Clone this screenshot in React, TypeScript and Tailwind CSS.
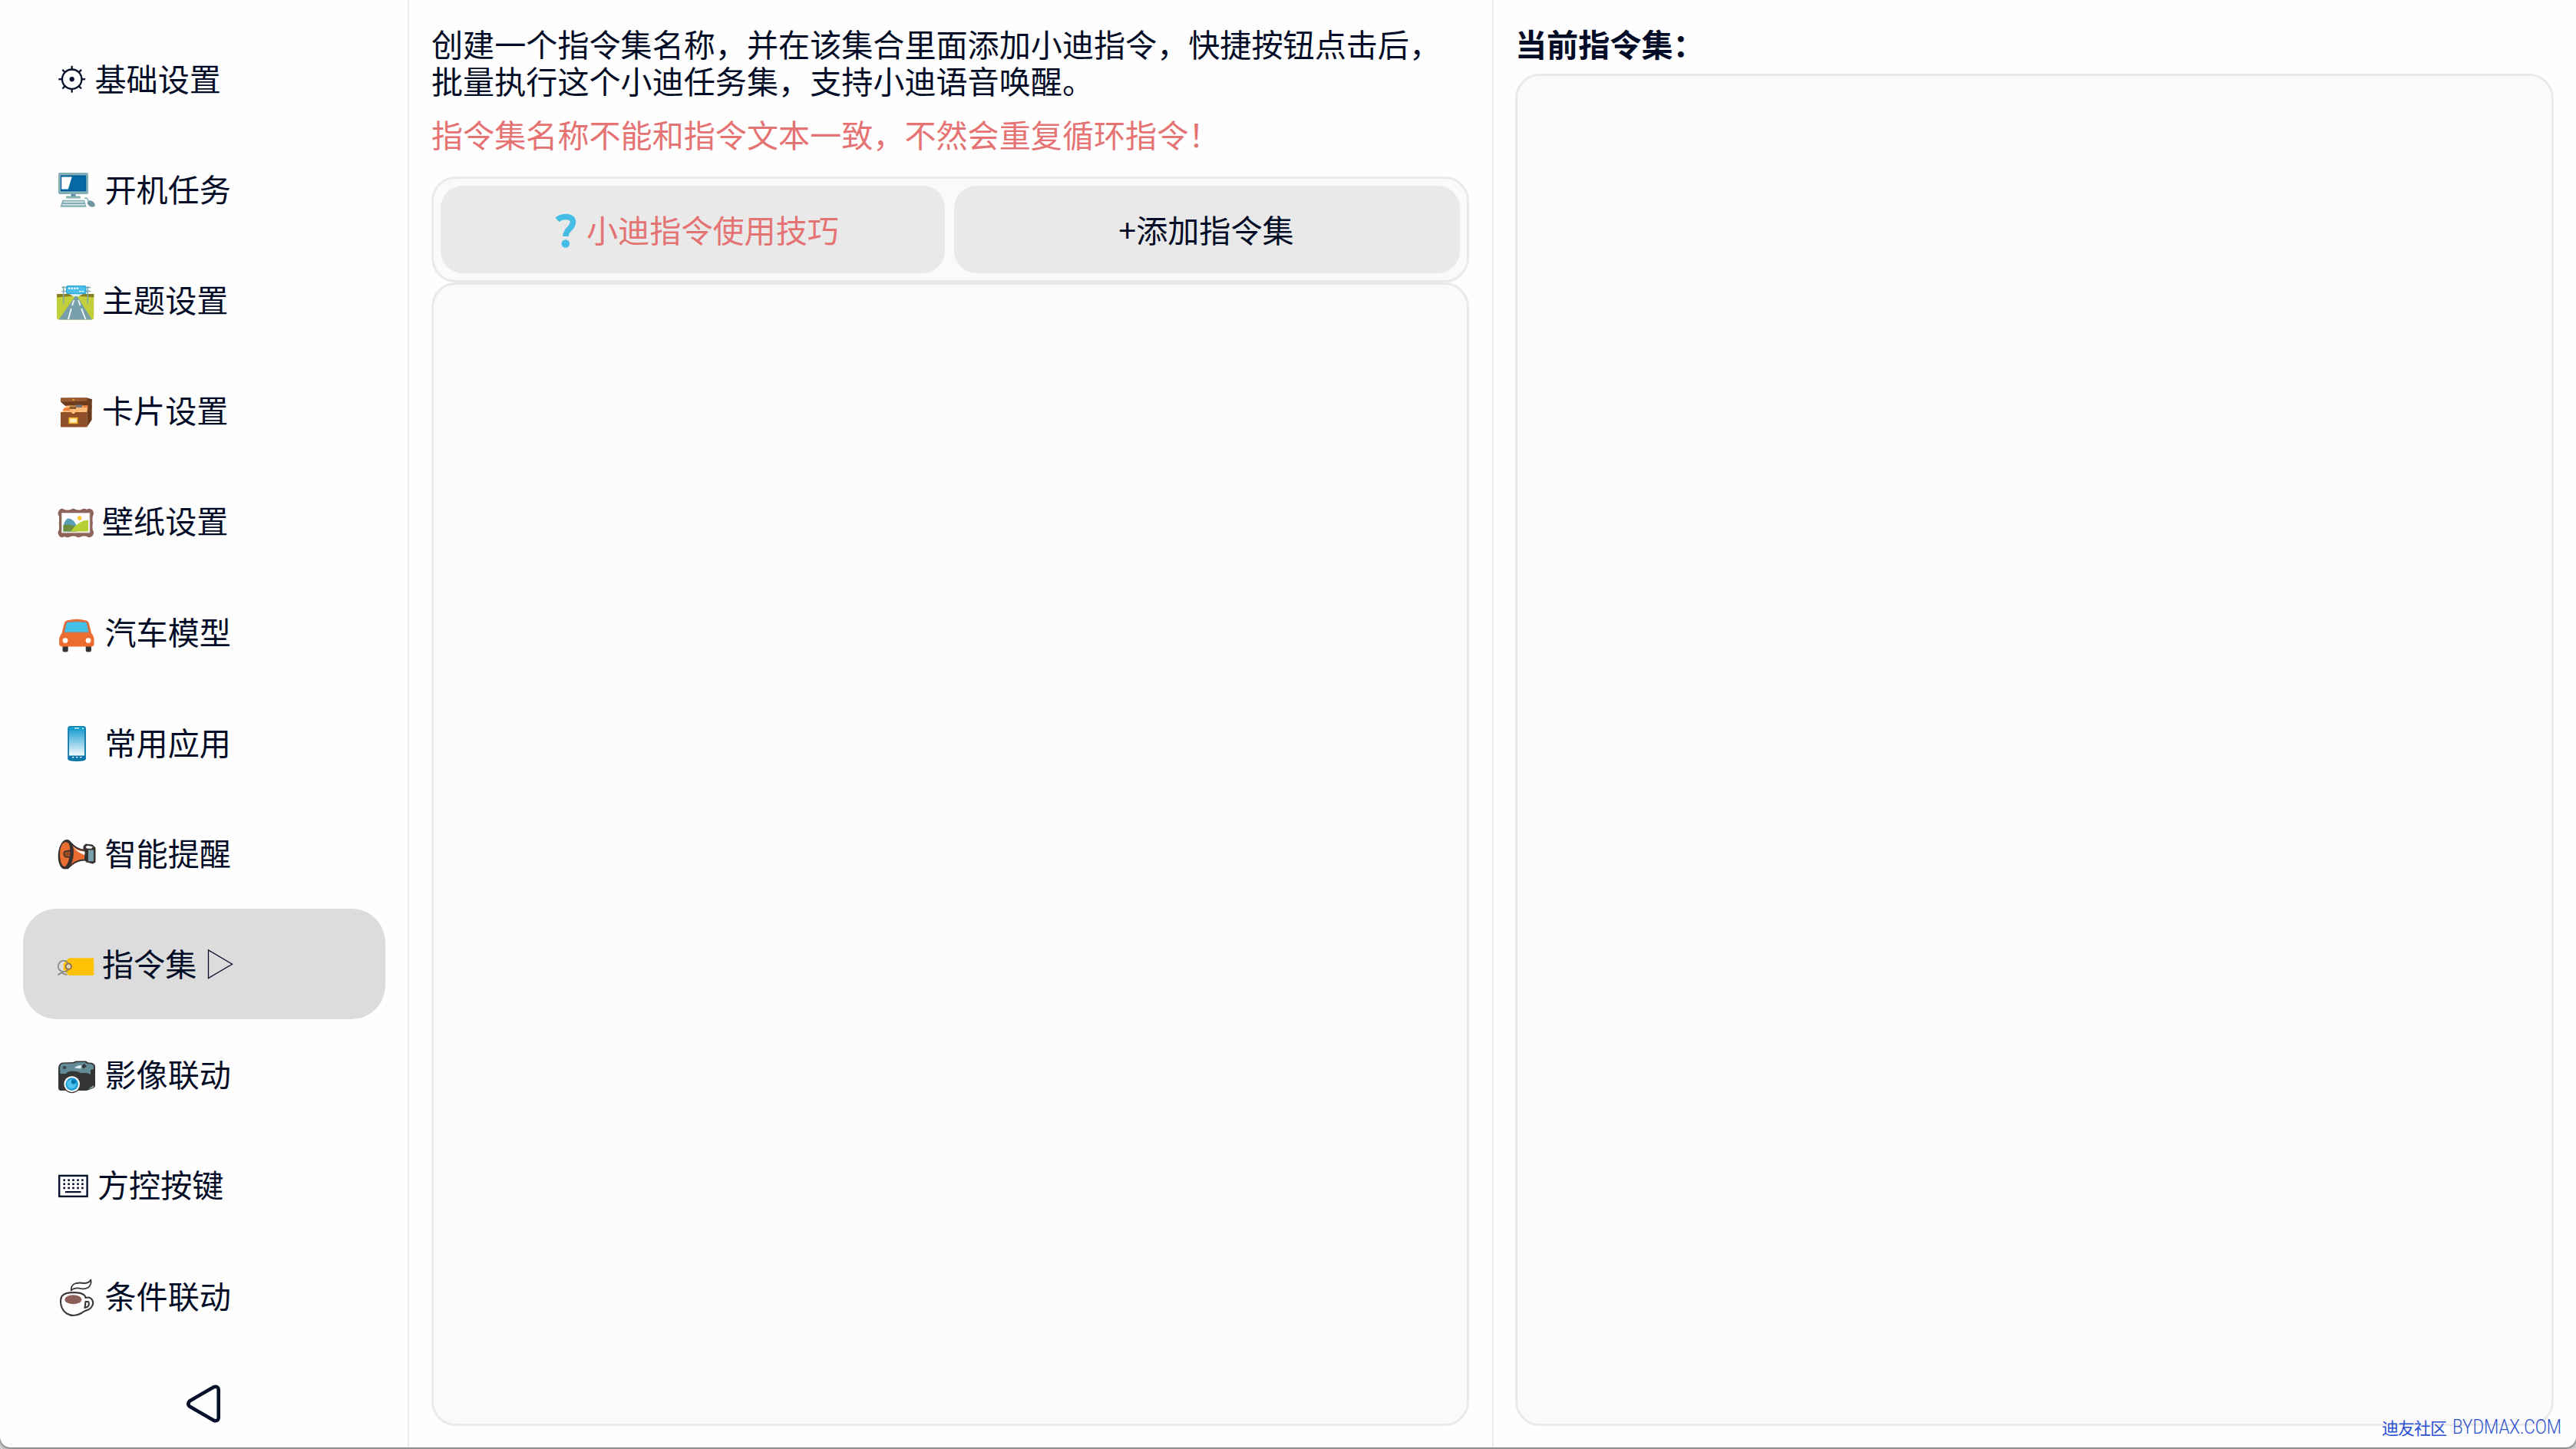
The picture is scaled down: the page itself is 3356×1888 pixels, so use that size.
import React from "react";

const GearIcon = () => (
  <g stroke="#07102a" fill="none" strokeWidth="2.3">
    <circle cx="18.7" cy="29.2" r="12.7" />
    <circle cx="18.7" cy="29.2" r="3.1" fill="#07102a" stroke="none" />
    {[0, 45, 90, 135, 180, 225, 270, 315].map((a) => (
      <path key={a} d="M18.7 16.5V11.8" transform={`rotate(${a} 18.7 29.2)`} />
    ))}
  </g>
);

const ComputerIcon = () => (
  <g>
    <rect x="1" y="7" width="39" height="28" rx="2" fill="#82aeb6" />
    <rect x="4" y="10.5" width="33.2" height="20.7" fill="#01579b" />
    <rect x="5" y="11.5" width="31.4" height="18.6" fill="#0569a4" />
    <path d="M5.2 12.5H18.7L13.8 28.4H5.2Z" fill="#fff" />
    <rect x="17.5" y="35" width="6" height="3" fill="#5f8c96" />
    <rect x="11" y="37.5" width="19" height="3" rx="1" fill="#82aeb6" />
    <path d="M6.3 42.7H35L37.6 51.7H3.5Z" fill="#82aeb6" />
    <path d="M7.5 45.3H34.3M6.3 48.7H35.6" stroke="#dbe8ea" strokeWidth="1.5" />
    <path d="M35 40.2C39 39.6 39.5 41 40 44.5" stroke="#82aeb6" strokeWidth="1.5" fill="none" />
    <ellipse cx="43.8" cy="47.6" rx="5.4" ry="3.7" transform="rotate(32 43.8 47.6)" fill="#6f98a2" />
  </g>
);

const RoadIcon = () => (
  <g>
    <path d="M-1 21H47.3V51.5a3 3 0 0 1-3 3H2a3 3 0 0 1-3-3Z" fill="#c0cf3a" />
    <path d="M-1 21H47.3V25.5L24 23.5L-1 25.5Z" fill="#8a7d22" />
    <path d="M15 21H33L27 24.5H21Z" fill="#e6f3f5" />
    <path d="M23 24H25.5L44.8 54.5H1.5Z" fill="#78a0ab" />
    <path d="M21.5 29L19 36M17.8 40L14 54M27 29L29.5 36M31 40L36.5 54" stroke="#f5fafa" strokeWidth="1.8" />
    <path d="M7.7 11V34M39.3 11V34M5.5 12.5H43M5.5 17.5H43" stroke="#82a5ad" strokeWidth="1.5" />
    <rect x="11" y="10" width="26.5" height="11.3" rx="2.5" fill="#2da8dd" />
    <rect x="12.3" y="11.2" width="23.9" height="8.8" rx="1.5" fill="#4cc0ea" />
    <path d="M14 13.8H27" stroke="#fff" strokeWidth="2" strokeDasharray="2.4 1.2" />
    <path d="M28 17.6H34" stroke="#fff" strokeWidth="1.4" strokeDasharray="2.6 .8" />
  </g>
);

const CardBoxIcon = () => (
  <g>
    <path d="M4 11.6L38 11.2L45 13.3L44.3 26L38.3 30L9.5 21.6L4 16.5Z" fill="#6d3d1e" />
    <path d="M4 11.6L38 11.2L38.3 15.5L8 16.8L4 15.8Z" fill="#9a5a30" />
    <path d="M11.7 21.5H39.5L38.3 31H5Z" fill="#ffbb75" />
    <path d="M8.5 24.5H16V28H6.5Z" fill="#f0803c" />
    <path d="M16 22.6H24V26H15Z" fill="#8a5a2c" />
    <path d="M24 20.5H32V24H24Z" fill="#747474" />
    <path d="M33 21.5H39V24H33Z" fill="#ef7c3b" />
    <path d="M4 30H17.5Q20.5 33.5 23.5 30H38.3V49.5H4Z" fill="#8f4f28" />
    <path d="M38.3 30L44.6 20V40L38.3 49.5Z" fill="#6d3a1c" />
    <circle cx="20.5" cy="13.8" r="1.2" fill="#f2a83c" />
    <circle cx="20.5" cy="30.6" r="1.5" fill="#ffcc80" />
    <rect x="15.2" y="37.6" width="10.4" height="6.8" fill="#ffefc0" stroke="#f5b22b" strokeWidth="1.6" />
  </g>
);

const PictureIcon = () => (
  <g>
    <rect x="2" y="13.5" width="43.5" height="34" fill="#8f625a" />
    <path
      d="M2 14Q5 10 9 13Q13 16 17 13Q20 10.5 24 13Q28 15.5 31 13Q35 10.5 38 13Q42 10 45.5 14Q48.5 18 45.5 22Q43.5 26 46 30.5Q43.5 35 45.5 39Q48.5 43 45.5 47Q42 51 38 48Q35 46 31 48Q27 50.5 24 48Q20 46 17 48Q13 50.5 9 48Q5 51 2 47Q-1 43 2 39Q4 35 1.5 30.5Q4 26 2 22Q-1 18 2 14Z"
      fill="#8f625a"
    />
    <rect x="5" y="17" width="37.3" height="26.5" fill="#d7ccc8" />
    <rect x="6" y="18" width="35.3" height="24.5" fill="#fff" />
    <path d="M7.5 34Q10 24 15 24.5Q22 26 25 35V41.4H7.5Z" fill="#5c9eb5" />
    <path d="M7.5 33Q14 31.5 24 35V41.4H7.5Z" fill="#6c8f3e" />
    <path d="M17 41.4Q27 27 40 26.5V41.4Z" fill="#b7d032" />
    <circle cx="28.7" cy="24.1" r="2.8" fill="#fbc52c" />
  </g>
);

const CarIcon = () => (
  <g>
    <rect x="6.5" y="42" width="7.2" height="12.6" rx="2.5" fill="#333" />
    <rect x="36.7" y="42" width="7.2" height="12.6" rx="2.5" fill="#333" />
    <path
      d="M12 13.5Q25 10.2 37.5 13.5Q40 14.2 40.8 17L44.3 30.5Q47.6 34 47.6 39V43.5Q47.6 47.6 43.5 47.6H6.3Q2.1 47.6 2.1 43.5V39Q2.1 34 5.4 30.5L8.8 17Q9.5 14.2 12 13.5Z"
      fill="#ed6c30"
    />
    <path d="M13 15.6Q25 14 36.7 15.6Q38 16 38.6 18L40.6 29H8.7L11 18Q11.5 16 13 15.6Z" fill="#45c0e6" stroke="#a9806b" strokeWidth="1" />
    <circle cx="10" cy="39.6" r="3.4" fill="#fff" />
    <circle cx="40" cy="39.6" r="3.4" fill="#fff" />
  </g>
);

const PhoneIcon = () => (
  <g>
    <defs>
      <linearGradient id="phoneScreen" x1="0" y1="0" x2="0" y2="1">
        <stop offset="0" stopColor="#2ba4d6" />
        <stop offset="1" stopColor="#f4fafc" />
      </linearGradient>
    </defs>
    <path d="M13.2 10Q13.2 7 17 7H33Q36.9 7 36.9 10V50Q36.9 53 25 53Q13.2 53 13.2 50Z" fill="#0c77a8" />
    <path d="M14.5 10Q15 8 18 8H32Q35 8 35.5 10V13H14.5Z" fill="#169ccc" />
    <rect x="15" y="12.7" width="20" height="32.8" fill="url(#phoneScreen)" />
    <path d="M22 9.8H28" stroke="#d7eef6" strokeWidth="1.4" />
    <path d="M19 47.8H31.5" stroke="#e3f2f8" strokeWidth="1.6" strokeDasharray="2.2 2.9" />
    <circle cx="33" cy="10.2" r="1" fill="#d7eef6" />
  </g>
);

const MegaphoneIcon = () => (
  <g stroke="#36302e" strokeWidth="2" strokeLinejoin="round">
    <path d="M34.5 20L37 17.5L45 18.5L48.5 22V40L46 41.5L38 39.5L34.5 36Z" fill="#36302e" />
    <path d="M36.5 20.5L39 18.8L46 20.3L44 22.8L38 22.5Z" fill="#fff" stroke="none" />
    <rect x="40" y="24.5" width="7" height="14.8" fill="#78a0ab" stroke="none" />
    <path d="M12 12C17 12 22 25 36 25V37.5C26 37 20 42 13 48.5Z" fill="#e96c32" />
    <path d="M20 20C24 24.5 30 26.5 35.5 26.5V31C30 29 24 26 20 20Z" fill="#fff" stroke="none" />
    <ellipse cx="10.8" cy="30.2" rx="9" ry="18.3" transform="rotate(5 10.8 30.2)" fill="#36302e" />
    <path d="M9 14.5C3 17 2 30 4 39C5 44 7.5 46.5 10 46C16 42 18.5 20 14 15.5C12.5 14 10.5 14 9 14.5Z" fill="#ea6d31" stroke="none" />
    <path d="M9 26.5L17 25V34L10 33.5Q7 30 9 26.5Z" fill="#9c4a25" strokeWidth="1.4" />
  </g>
);

const TagIcon = () => (
  <g>
    <path d="M16 20.3H46.3Q47.3 20.3 47.3 21.3V42Q47.3 43 46.3 43H16Q14.5 43 13 41L7.7 35.5V27.5L13 22Q14.5 20.3 16 20.3Z" fill="#fdc204" />
    <circle cx="14.3" cy="31.3" r="3.6" fill="#e6d6ae" stroke="#84695c" strokeWidth="1.8" />
    <path d="M13.5 28C12.5 22.5 4 22 1.3 28.5C-.5 34 3 38.5 9.5 38C12 37.5 13.3 36.5 13.8 35M7 38.3L.5 42.3M5 38.8Q8 42 12.5 42" fill="none" stroke="#85827e" strokeWidth="1.6" />
  </g>
);

const CameraIcon = () => (
  <g>
    <path d="M1 20Q1 14 6 12.5L20 12L24 10.5L37 10.5L40 12.5Q49 12 49 18V42Q49 45 46 46L38 49H4Q1 49 1 45Z" fill="#353535" />
    <path d="M3 20Q3 14.5 7 13.8L21 13.5L25 12H35.5L39 14Q47 13.5 47 18V21L43 22V28L38 26H30Q26 23.5 19 23.5Q12 24 11 27H3.5Z" fill="#638b95" />
    <path d="M22 19.5Q25 15.5 32 16L30 20.5Z" fill="#d9e9ed" />
    <path d="M31 17L35 14L38 17L34 20.5Z" fill="#33373a" />
    <ellipse cx="9" cy="19" rx="2.5" ry="2" fill="#33474d" />
    <path d="M40 47L47 42V45Z" fill="#8fb0b8" />
    <circle cx="18.7" cy="40.6" r="11.7" fill="#3a3a3a" />
    <circle cx="18.7" cy="40.6" r="10.3" fill="#fff" />
    <circle cx="18.7" cy="40.6" r="8.3" fill="#1f9fd8" />
    <circle cx="18.2" cy="40.6" r="6" fill="#4fc3ee" />
    <circle cx="20.8" cy="37.6" r="3" fill="#0277ae" />
  </g>
);

const KeyboardIcon = () => (
  <g fill="#07102a">
    <rect x="2.2" y="15.9" width="36.4" height="27" fill="none" stroke="#07102a" strokeWidth="2.4" />
    {[21.7, 26.8, 31.9].map((y) =>
      [8.7, 14.6, 20.5, 26.5, 32.4].map((x) => (
        <rect key={`${x}-${y}`} x={x - 1.3} y={y - 1.3} width="2.6" height="2.6" />
      )),
    )}
    <rect x="10" y="36" width="20.5" height="2.2" />
  </g>
);

const CoffeeIcon = () => (
  <g fill="none" stroke="#3d3836" strokeWidth="2.1" strokeLinejoin="round">
    <path d="M36 29C32 22.5 10 22.5 5.5 29C2 37 5 47 12 51.5C18 55 25 54.5 31 51C34 48.5 36 48 40 46.5C45 44 47.5 38.5 45.5 34.5C43.5 30.5 40 30 36.5 31Z" fill="#fff" />
    <ellipse cx="20.4" cy="33.2" rx="11" ry="6" fill="#8c5f57" stroke="none" />
    <path d="M36.5 36H40Q42 39 39.5 42.5L35.5 44Z" />
    <path d="M17.8 21.5Q17 14 24 12Q29 11 34.5 12Q41 12 43.3 7.5Q44.5 14 40 17.5Q35 20.5 28 18.5Q21 18 17.8 21.5Z" strokeWidth="1.8" fill="#fff" />
  </g>
);

type Entry = { label: string; slot: string; Art: () => React.ReactElement; active?: boolean };

const entries: Entry[] = [
  { label: "基础设置", slot: "w-[48.5px]", Art: GearIcon },
  { label: "开机任务", slot: "w-[61.5px]", Art: ComputerIcon },
  { label: "主题设置", slot: "w-[58px]", Art: RoadIcon },
  { label: "卡片设置", slot: "w-[58px]", Art: CardBoxIcon },
  { label: "壁纸设置", slot: "w-[58px]", Art: PictureIcon },
  { label: "汽车模型", slot: "w-[61.5px]", Art: CarIcon },
  { label: "常用应用", slot: "w-[61.5px]", Art: PhoneIcon },
  { label: "智能提醒", slot: "w-[61.5px]", Art: MegaphoneIcon },
  { label: "指令集", slot: "w-[58px]", Art: TagIcon, active: true },
  { label: "影像联动", slot: "w-[61.5px]", Art: CameraIcon },
  { label: "方控按键", slot: "w-[52px]", Art: KeyboardIcon },
  { label: "条件联动", slot: "w-[61.5px]", Art: CoffeeIcon },
];

function MenuItem({ label, slot, Art, active }: Entry) {
  return (
    <li className={`flex h-[144.2px] shrink-0 items-center rounded-[44px] pl-[45px] ${active ? "bg-[#dcdcdc]" : ""}`}>
      <span className={`shrink-0 ${slot}`}>
        <svg width="50" height="56" viewBox="0 0 50 56" className="block max-w-none overflow-visible">
          <Art />
        </svg>
      </span>
      <span className="pb-[3px] whitespace-nowrap">{label}</span>
      {active && (
        <svg width="34" height="40" viewBox="0 0 34 40" className="ml-[14px]" fill="none" stroke="#07102a" strokeWidth="1.3">
          <path d="M1.5 2V38.500L32.500 20.200Z" />
        </svg>
      )}
    </li>
  );
}

export default function App() {
  return (
    <div className="relative h-[1888px] w-[3356px] overflow-hidden bg-[#cfcfcf] font-['Noto_Sans_CJK_SC',sans-serif] text-[41.1px] leading-[48px] text-[#020c26]">
      <div className="flex h-[1886px] w-full overflow-hidden rounded-b-[14px] bg-[#fefefe] shadow-[0_1px_3px_1px_#7a7a7a]">
        <nav className="flex w-[533px] shrink-0 flex-col border-r-2 border-[#ebebed] pt-[30px] pr-[29px] pl-[30px]">
          <ul className="flex flex-col">
            {entries.map((e) => (
              <MenuItem key={e.label} {...e} />
            ))}
          </ul>
          <button className="mt-[43px] mr-[3px] self-center" aria-label="返回">
            <svg width="46" height="52" viewBox="0 0 46 52" fill="none" stroke="#07102a" strokeWidth="4.6" strokeLinejoin="round">
              <path d="M36.500 4.200L5 22.500Q1.500 26 5 29.500L36.500 47.800Q42.200 49.500 42.700 44.500V7.500Q42.200 2.500 36.500 4.200Z" />
            </svg>
          </button>
        </nav>

        <main className="flex w-[1413px] shrink-0 flex-col border-r-2 border-[#ebebed] pt-[32px] pr-[30px] pb-[28px] pl-[29px]">
          <p className="whitespace-nowrap">
            创建一个指令集名称，并在该集合里面添加小迪指令，快捷按钮点击后，
            <br />
            批量执行这个小迪任务集，支持小迪语音唤醒。
          </p>
          <p className="mt-[22px] whitespace-nowrap text-[#e57373]">指令集名称不能和指令文本一致，不然会重复循环指令！</p>
          <div className="mt-[32px] flex h-[138px] shrink-0 gap-[12px] rounded-[32px] border-[3px] border-[#ebe9ea] bg-[#fbf9fa] p-[9px]">
            <button className="flex flex-1 items-center justify-center rounded-[29px] bg-[#e9e9e9] text-[#e57373]">
              <svg width="52" height="56" viewBox="0 0 52 56" fill="none" stroke="#45bde4" className="shrink-0">
                <path d="M14 15.500C20 10 34.500 9.500 34.500 18.500C34.500 27 25 27 25 37" strokeWidth="7.500" />
                <circle cx="24.800" cy="46.500" r="5.300" fill="#45bde4" stroke="none" />
              </svg>
              <span className="pb-[3px]">小迪指令使用技巧</span>
            </button>
            <button className="flex flex-1 items-center justify-center rounded-[29px] bg-[#e9e9e9] pr-[2px] pb-[3px]">+添加指令集</button>
          </div>
          <div className="flex-1 rounded-[32px] border-[3px] border-[#ebe9ea] bg-[#fbf9fa]" />
        </main>

        <section className="flex flex-1 flex-col pt-[32px] pr-[29px] pb-[28px] pl-[28px]">
          <h2 className="font-bold">当前指令集：</h2>
          <div className="mt-[16px] flex-1 rounded-[32px] border-[3px] border-[#ebe9ea] bg-[#fbf9fa]" />
        </section>
      </div>

      <div className="absolute right-[17px] bottom-[12px] flex items-center text-[22px] leading-[32px] whitespace-nowrap text-[#2b50d0]">
        <span className="tracking-[-1px]">迪友社区</span>
        <span className="mt-[3px] ml-[8px] w-[144px] origin-left scale-x-[0.89] font-['Roboto',sans-serif] text-[25px] font-light">BYDMAX.COM</span>
      </div>
    </div>
  );
}
